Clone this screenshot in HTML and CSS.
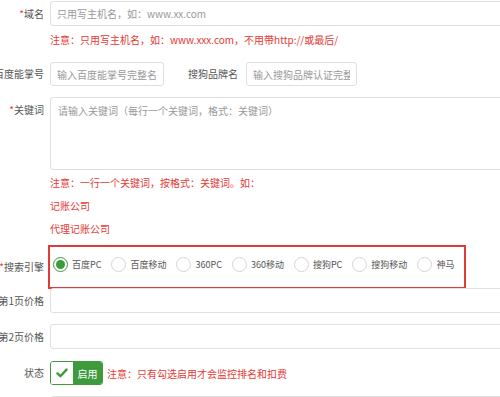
FILE: index.html
```html
<!DOCTYPE html>
<html lang="zh-CN">
<head>
    <meta charset="UTF-8">
    <meta name="viewport" content="width=device-width, initial-scale=1.0">
    <title>关键词监控</title>
    <link rel="stylesheet" href="styles.css">
</head>
<body>
    <div class="form">
        <div class="row row-domain">
            <label class="label"><span class="req">*</span>域名</label>
            <input class="input input-wide" type="text" placeholder="只用写主机名，如：www.xx.com">
        </div>
        <p class="note note-domain">注意：只用写主机名，如：www.xxx.com，不用带http://或最后/</p>

        <div class="row row-brand">
            <label class="label">百度能掌号</label>
            <input class="input input-baidu" type="text" placeholder="输入百度能掌号完整名">
            <label class="label label-inline">搜狗品牌名</label>
            <input class="input input-sogou" type="text" placeholder="输入搜狗品牌认证完整">
        </div>

        <div class="row row-top row-keywords">
            <label class="label label-top"><span class="req">*</span>关键词</label>
            <textarea class="input textarea" placeholder="请输入关键词（每行一个关键词，格式：关键词）"></textarea>
        </div>
        <div class="note-block">
            <p class="note">注意：一行一个关键词，按格式：关键词。如：</p>
            <p class="note">记账公司</p>
            <p class="note">代理记账公司</p>
        </div>

        <div class="row row-engine">
            <label class="label"><span class="req">*</span>搜索引擎</label>
            <div class="engine-box">
                <label class="radio checked"><span class="radio-dot"></span>百度PC</label>
                <label class="radio"><span class="radio-dot"></span>百度移动</label>
                <label class="radio"><span class="radio-dot"></span>360PC</label>
                <label class="radio"><span class="radio-dot"></span>360移动</label>
                <label class="radio"><span class="radio-dot"></span>搜狗PC</label>
                <label class="radio"><span class="radio-dot"></span>搜狗移动</label>
                <label class="radio"><span class="radio-dot"></span>神马</label>
            </div>
        </div>

        <div class="row row-price1">
            <label class="label">第1页价格</label>
            <input class="input input-wide" type="text">
        </div>

        <div class="row row-price2">
            <label class="label">第2页价格</label>
            <input class="input input-wide" type="text">
        </div>

        <div class="row row-status">
            <label class="label">状态</label>
            <div class="switch">
                <span class="switch-check">
                    <svg width="12" height="10" viewBox="0 0 12 10"><path d="M1.5 5.4 L4.4 8.2 L10.5 1.6" fill="none" stroke="#3d9a3d" stroke-width="2.4" stroke-linecap="round" stroke-linejoin="round"/></svg>
                </span>
                <span class="switch-on">启用</span>
            </div>
            <span class="note note-status">注意：只有勾选启用才会监控排名和扣费</span>
        </div>

        <div class="row row-last">
            <label class="label"></label>
            <input class="input input-wide" type="text">
        </div>
    </div>
</body>
</html>
```

FILE: styles.css
```css
html {
    overflow: hidden;
}
body {
    margin: 0;
    font-family: "Noto Sans CJK SC", "Noto Sans", sans-serif;
    font-size: 10px;
    color: #555;
    background: #fff;
}
.form {
    width: 520px;
    height: 397px;
    overflow: hidden;
    padding-top: 1px;
    box-sizing: border-box;
}
.row {
    display: flex;
    align-items: center;
}
.row-top {
    align-items: flex-start;
}
.label {
    width: 44px;
    flex: none;
    display: flex;
    justify-content: flex-end;
    white-space: nowrap;
    line-height: 14px;
    color: #555;
}
.label-top {
    padding-top: 6px;
}
.label-inline {
    width: auto;
    margin-left: 24px;
}
.req {
    color: #e53935;
}
.input {
    box-sizing: border-box;
    height: 25px;
    margin-left: 6px;
    padding: 0 6px;
    border: 1px solid #e0e0e0;
    border-radius: 3px;
    font-family: inherit;
    font-size: 10px;
    color: #555;
    background: #fff;
    outline: none;
}
.input::placeholder {
    color: #999;
}
.input-wide {
    flex: 1;
    margin-right: 4px;
}
.input-baidu {
    width: 114px;
    height: 24px;
}
.input-sogou {
    width: 111px;
    height: 24px;
    margin-left: 8px;
}
.textarea {
    flex: 1;
    height: 73px;
    margin-right: 4px;
    padding: 6px 7px;
    resize: none;
    line-height: 14px;
}
.note {
    margin: 0;
    padding-left: 50px;
    color: #e53935;
    line-height: 13px;
}
.note-domain {
    margin-top: 7px;
}
.row-brand {
    margin-top: 16px;
}
.row-keywords {
    margin-top: 11px;
}
.note-block {
    margin-top: 1px;
}
.note-block .note {
    line-height: 23px;
}
.row-engine {
    margin-top: 5px;
}
.engine-box {
    box-sizing: border-box;
    width: 418px;
    height: 44px;
    margin-left: 4px;
    padding: 10px 0 0 3px;
    border: 2px solid #e03a3a;
    display: flex;
    align-items: flex-start;
}
.radio {
    display: flex;
    align-items: center;
    margin-right: 10px;
    line-height: 15px;
    font-size: 9px;
    color: #555;
    white-space: nowrap;
}
.radio-dot {
    box-sizing: border-box;
    width: 15px;
    height: 15px;
    margin-right: 4px;
    border: 1px solid #d6d6d6;
    border-radius: 50%;
    display: flex;
    align-items: center;
    justify-content: center;
}
.radio.checked .radio-dot {
    border-color: #3d9a3d;
}
.radio.checked .radio-dot::after {
    content: "";
    width: 9px;
    height: 9px;
    border-radius: 50%;
    background: #3d9a3d;
}
.row-price1 {
    margin-top: -1px;
}
.row-price2 {
    margin-top: 11px;
}
.row-status {
    margin-top: 12px;
}
.switch {
    box-sizing: border-box;
    display: flex;
    width: 53px;
    height: 24px;
    margin-left: 6px;
    border: 1px solid #3d9a3d;
    border-radius: 3px;
    overflow: hidden;
}
.switch-check {
    width: 22px;
    display: flex;
    align-items: center;
    justify-content: center;
    background: #fff;
}
.switch-on {
    flex: 1;
    display: flex;
    align-items: center;
    justify-content: center;
    background: #3d9a3d;
    color: #fff;
    font-size: 10px;
}
.note-status {
    padding-left: 4px;
}
.row-last {
    margin-top: 11px;
}
```
